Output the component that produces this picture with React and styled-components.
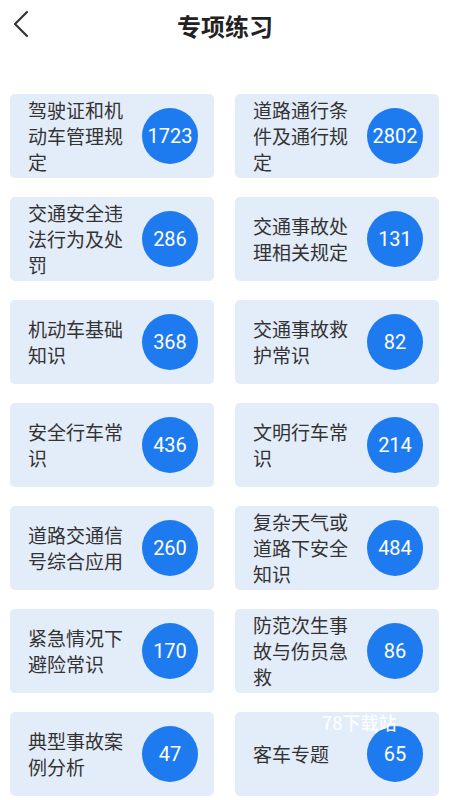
import styled, { createGlobalStyle } from 'styled-components'

const Global = createGlobalStyle`
    body {
        margin: 0;
        background: #fff;
        font-family: "Noto Sans CJK SC", "Noto Sans", sans-serif;
    }
`

const Page = styled.div`
    width: 450px;
    height: 800px;
    position: relative;
    overflow: hidden;
    background: #fff;
`

const Header = styled.div`
    height: 50px;
    display: flex;
    align-items: center;
    justify-content: center;
    position: relative;
`

const Back = styled.div`
    position: absolute;
    left: 10px;
    top: 10px;
    width: 24px;
    height: 28px;
`

const Title = styled.h1`
    margin: 0;
    font-size: 24px;
    font-weight: 700;
    color: #222;
    letter-spacing: 0;
`

const Grid = styled.div`
    display: grid;
    grid-template-columns: 1fr 1fr;
    column-gap: 21px;
    row-gap: 19px;
    padding: 44px 11px 0 10px;
`

const Card = styled.div`
    height: 84px;
    background: #e3ecf9;
    border-radius: 5px;
    display: flex;
    align-items: center;
    justify-content: space-between;
    padding: 0 16px 0 18px;
    box-sizing: border-box;
`

const Name = styled.div`
    width: 100px;
    font-size: 19px;
    line-height: 26px;
    color: #333;
`

const Count = styled.div`
    width: 56px;
    height: 56px;
    border-radius: 50%;
    background: #1e7bef;
    color: #fff;
    display: flex;
    align-items: center;
    justify-content: center;
    font-family: Roboto, "Noto Sans", sans-serif;
    font-size: 20px;
    flex-shrink: 0;
`

const Watermark = styled.div`
    position: absolute;
    left: 322px;
    top: 709px;
    color: rgba(255, 255, 255, 0.92);
    font-size: 18px;
    font-weight: 500;
`

const items = [
    ['驾驶证和机动车管理规定', 1723],
    ['道路通行条件及通行规定', 2802],
    ['交通安全违法行为及处罚', 286],
    ['交通事故处理相关规定', 131],
    ['机动车基础知识', 368],
    ['交通事故救护常识', 82],
    ['安全行车常识', 436],
    ['文明行车常识', 214],
    ['道路交通信号综合应用', 260],
    ['复杂天气或道路下安全知识', 484],
    ['紧急情况下避险常识', 170],
    ['防范次生事故与伤员急救', 86],
    ['典型事故案例分析', 47],
    ['客车专题', 65],
]

const App = () => {
    return <Page>
        <Global />
        <Header>
            <Back>
                <svg width="24" height="28" viewBox="0 0 24 28">
                    <path d="M17 2 L5 14 L17 26" fill="none" stroke="#333" strokeWidth="2.2" strokeLinecap="round" strokeLinejoin="round" />
                </svg>
            </Back>
            <Title>专项练习</Title>
        </Header>
        <Grid>
            {items.map(([name, n]) => (
                <Card key={name}>
                    <Name>{name}</Name>
                    <Count>{n}</Count>
                </Card>
            ))}
        </Grid>
        <Watermark>78下载站</Watermark>
    </Page>
}

export default App
